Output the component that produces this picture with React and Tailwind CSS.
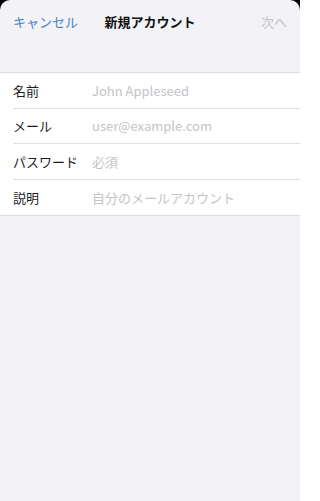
export default function App() {
    const fields = [
        { label: '名前', placeholder: 'John Appleseed' },
        { label: 'メール', placeholder: 'user@example.com' },
        { label: 'パスワード', placeholder: '必須' },
        { label: '説明', placeholder: '自分のメールアカウント' },
    ];

    return (
        <div className="bg-black w-[300px] h-[501px]" style={{ fontFamily: '"Noto Sans CJK JP", "Noto Sans", sans-serif' }}>
            <div className="h-full bg-[#f2f2f7] rounded-t-[10px] overflow-hidden">
                {/* nav bar */}
                <div className="h-[44px] flex items-center justify-between px-[13px] text-[13px]">
                    <button className="text-[#4285cc] w-[70px] text-left">キャンセル</button>
                    <h1 className="font-bold text-[#111]">新規アカウント</h1>
                    <button className="text-[#c2c2c6] w-[70px] text-right">次へ</button>
                </div>

                {/* form */}
                <div className="mt-[28px] bg-white border-y border-[#dcdce0]">
                    {fields.map((f, i) => (
                        <div key={f.label} className="pl-[13px]">
                            <div className={`h-[35.5px] flex items-center text-[13px] ${i < fields.length - 1 ? 'border-b border-[#e0e0e4]' : ''}`}>
                                <span className="w-[79px] shrink-0 text-[#1c1c1e]">{f.label}</span>
                                <input
                                    className="flex-1 min-w-0 bg-transparent outline-none placeholder-[#c4c4c8]"
                                    placeholder={f.placeholder}
                                />
                            </div>
                        </div>
                    ))}
                </div>
            </div>
        </div>
    );
}
